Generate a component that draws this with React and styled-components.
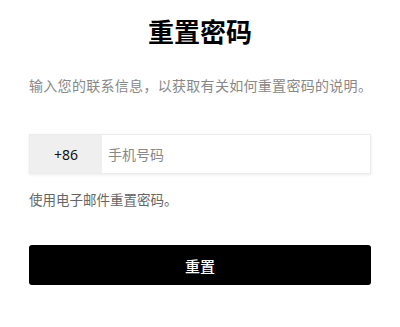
import React from "react";
import styled, { createGlobalStyle } from "styled-components";

const Global = createGlobalStyle`
  html, body { margin: 0; padding: 0; background: #fff; }
  body { font-family: "Noto Sans", "Noto Sans CJK SC", sans-serif; }
`;

const Page = styled.div`
  padding: 0 29px;
  display: flex;
  flex-direction: column;
`;

const Title = styled.h1`
  margin: 14px 0 0;
  text-align: center;
  font-size: 26px;
  line-height: 36px;
  font-weight: 700;
  color: #000;
`;

const Subtitle = styled.p`
  margin: 26px 0 0;
  font-size: 14px;
  line-height: 20px;
  letter-spacing: 0.3px;
  white-space: nowrap;
  color: #888;
`;

const Field = styled.div`
  margin-top: 38px;
  display: flex;
  height: 38px;
  border: 1px solid #ececec;
  box-shadow: 0 1px 3px rgba(0, 0, 0, 0.08);
  background: #fff;
`;

const Prefix = styled.div`
  width: 72px;
  flex: none;
  background: #efefef;
  display: flex;
  align-items: center;
  justify-content: center;
  font-size: 14px;
  color: #111;
`;

const Input = styled.input`
  flex: 1;
  border: none;
  outline: none;
  padding: 0 6px;
  font-family: "Noto Sans", "Noto Sans CJK SC", sans-serif;
  font-size: 14px;
  color: #333;
  background: transparent;
  &::placeholder { color: #888; }
`;

const Link = styled.p`
  margin: 16px 0 0;
  font-size: 13.5px;
  line-height: 20px;
  color: #666;
`;

const Button = styled.button`
  margin-top: 35px;
  height: 40px;
  border: none;
  border-radius: 3px;
  background: #000;
  color: #fff;
  font-family: "Noto Sans", "Noto Sans CJK SC", sans-serif;
  font-size: 15px;
  font-weight: 500;
`;

export default function App() {
  return (
    <>
      <Global />
      <Page>
        <Title>重置密码</Title>
        <Subtitle>输入您的联系信息，以获取有关如何重置密码的说明。</Subtitle>
        <Field>
          <Prefix>+86</Prefix>
          <Input placeholder="手机号码" />
        </Field>
        <Link>使用电子邮件重置密码。</Link>
        <Button>重置</Button>
      </Page>
    </>
  );
}
